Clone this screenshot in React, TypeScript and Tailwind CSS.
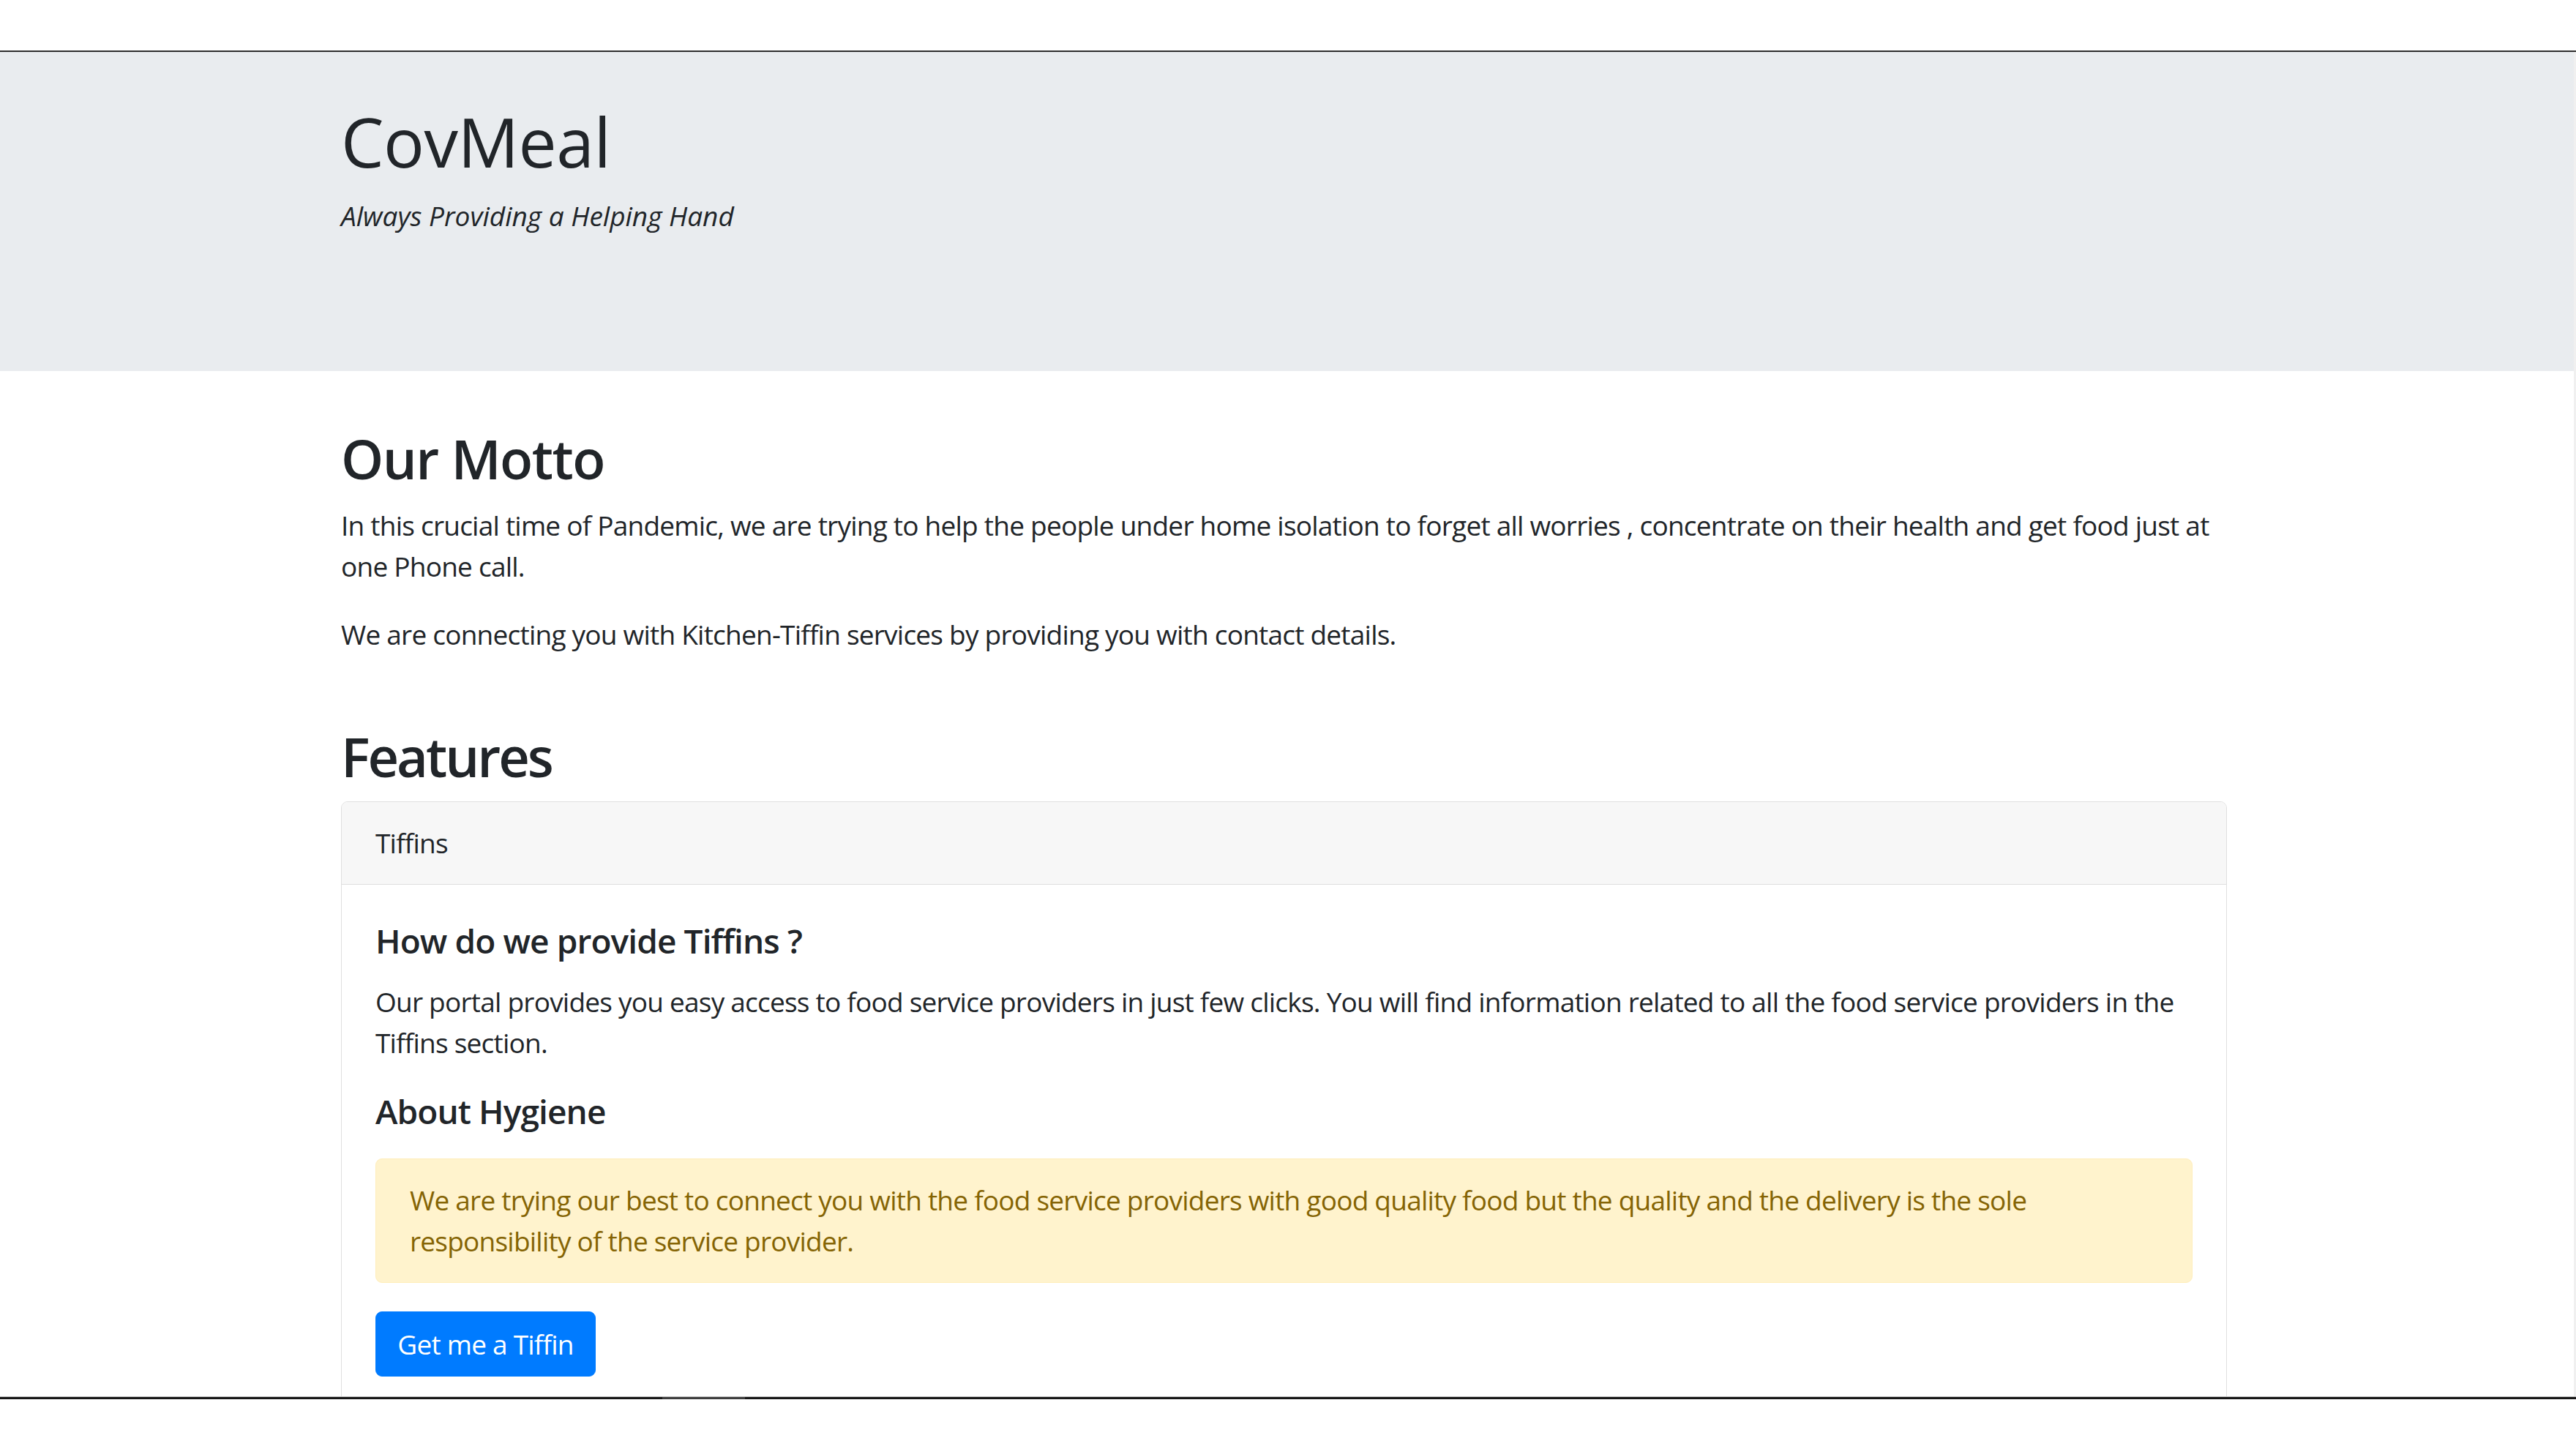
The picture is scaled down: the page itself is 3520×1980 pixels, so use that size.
import React from "react";

export default function App() {
  return (
    <div className="min-h-[1980px] bg-white font-['Open_Sans',_'Noto_Sans',_sans-serif] text-[#212529]">
      <div className="h-[69px] bg-white" />
      <div className="h-[2px] bg-[#2e2e2e]" />
      <div className="flex h-[1837px]">
        <div className="flex-1 overflow-hidden">
          <header className="h-[436px] bg-[#e9ecef] pt-[66px]">
            <div className="ml-[466px] w-[2577px]">
              <h1 className="mb-[18px] text-[93px] font-normal leading-[112px] tracking-[-0.5px]">CovMeal</h1>
              <p className="text-[37px] italic leading-[56px]">Always Providing a Helping Hand</p>
            </div>
          </header>

          <main className="ml-[466px] w-[2577px] pt-[75px] text-[37px] leading-[56px] tracking-[-0.77px]">
            <h2 className="mb-[19px] text-[74px] font-semibold leading-[89px] tracking-[-1.5px]">Our Motto</h2>
            <p className="mb-[37px]">
              In this crucial time of Pandemic, we are trying to help the people under home isolation to forget all worries , concentrate on their health and get food just at one Phone call.
            </p>
            <p>We are connecting you with Kitchen-Tiffin services by providing you with contact details.</p>

            <h2 className="mb-[17px] mt-[94px] text-[74px] font-semibold leading-[89px] tracking-[-3px]">Features</h2>

            <section className="overflow-hidden rounded-[9px] border border-[#dfdfdf]">
              <div className="border-b border-[#dfdfdf] bg-[#f7f7f7] px-[46px] py-[28px]">Tiffins</div>
              <div className="px-[46px] pt-[48px]">
                <h5 className="mb-[28px] text-[46px] font-semibold leading-[56px] tracking-[-0.9px]">How do we provide Tiffins ?</h5>
                <p className="mb-[37px]">
                  Our portal provides you easy access to food service providers in just few clicks. You will find information related to all the food service providers in the Tiffins section.
                </p>
                <h5 className="mb-[37px] text-[46px] font-semibold leading-[56px] tracking-[-0.9px]">About Hygiene</h5>
                <div className="mb-[39px] rounded-[9px] border border-[#ffeeba] bg-[#fff3cd] px-[46px] py-[28px] text-[#856404]">
                  We are trying our best to connect you with the food service providers with good quality food but the quality and the delivery is the sole responsibility of the service provider.
                </div>
                <button className="h-[89px] w-[301px] rounded-[9px] border border-[#007bff] bg-[#007bff] text-center text-[37px] leading-[56px] text-white">
                  Get me a Tiffin
                </button>
                <div className="h-[200px]" />
              </div>
            </section>
          </main>
        </div>
        <div className="w-[3px] bg-[#f0f0f0]" />
      </div>
      <div className="h-[1px] bg-[#c4c4c4]" />
      <div className="flex h-[3px] bg-[#161616]">
        <div className="ml-[905px] w-[113px] bg-[#3d3d3d]" />
      </div>
    </div>
  );
}
